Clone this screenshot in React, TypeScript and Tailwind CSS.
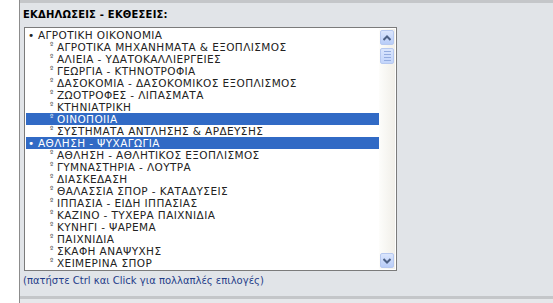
import React from 'react';

type Item = { label: string; level: 0 | 1; selected?: boolean };

const items: Item[] = [
  { label: 'ΑΓΡΟΤΙΚΗ ΟΙΚΟΝΟΜΙΑ', level: 0 },
  { label: 'ΑΓΡΟΤΙΚΑ ΜΗΧΑΝΗΜΑΤΑ & ΕΞΟΠΛΙΣΜΟΣ', level: 1 },
  { label: 'ΑΛΙΕΙΑ - ΥΔΑΤΟΚΑΛΛΙΕΡΓΕΙΕΣ', level: 1 },
  { label: 'ΓΕΩΡΓΙΑ - ΚΤΗΝΟΤΡΟΦΙΑ', level: 1 },
  { label: 'ΔΑΣΟΚΟΜΙΑ - ΔΑΣΟΚΟΜΙΚΟΣ ΕΞΟΠΛΙΣΜΟΣ', level: 1 },
  { label: 'ΖΩΟΤΡΟΦΕΣ - ΛΙΠΑΣΜΑΤΑ', level: 1 },
  { label: 'ΚΤΗΝΙΑΤΡΙΚΗ', level: 1 },
  { label: 'ΟΙΝΟΠΟΙΙΑ', level: 1, selected: true },
  { label: 'ΣΥΣΤΗΜΑΤΑ ΑΝΤΛΗΣΗΣ & ΑΡΔΕΥΣΗΣ', level: 1 },
  { label: 'ΑΘΛΗΣΗ - ΨΥΧΑΓΩΓΙΑ', level: 0, selected: true },
  { label: 'ΑΘΛΗΣΗ - ΑΘΛΗΤΙΚΟΣ ΕΞΟΠΛΙΣΜΟΣ', level: 1 },
  { label: 'ΓΥΜΝΑΣΤΗΡΙΑ - ΛΟΥΤΡΑ', level: 1 },
  { label: 'ΔΙΑΣΚΕΔΑΣΗ', level: 1 },
  { label: 'ΘΑΛΑΣΣΙΑ ΣΠΟΡ - ΚΑΤΑΔΥΣΕΙΣ', level: 1 },
  { label: 'ΙΠΠΑΣΙΑ - ΕΙΔΗ ΙΠΠΑΣΙΑΣ', level: 1 },
  { label: 'ΚΑΖΙΝΟ - ΤΥΧΕΡΑ ΠΑΙΧΝΙΔΙΑ', level: 1 },
  { label: 'ΚΥΝΗΓΙ - ΨΑΡΕΜΑ', level: 1 },
  { label: 'ΠΑΙΧΝΙΔΙΑ', level: 1 },
  { label: 'ΣΚΑΦΗ ΑΝΑΨΥΧΗΣ', level: 1 },
  { label: 'ΧΕΙΜΕΡΙΝΑ ΣΠΟΡ', level: 1 },
];

function ScrollButton({ dir }: { dir: 'up' | 'down' }) {
  return (
    <div className="w-[14px] h-[15px] rounded-[2px] border border-[#b7c9f0] bg-gradient-to-b from-[#dbe6fd] to-[#b9cdf8] flex items-center justify-center">
      <svg width="8" height="6" viewBox="0 0 8 6">
        {dir === 'up' ? (
          <path d="M0.5 5 L4 1.5 L7.5 5" stroke="#4d6185" strokeWidth="2" fill="none" />
        ) : (
          <path d="M0.5 1 L4 4.5 L7.5 1" stroke="#4d6185" strokeWidth="2" fill="none" />
        )}
      </svg>
    </div>
  );
}

export default function App() {
  return (
    <div className="w-[553px] h-[303px] flex bg-white overflow-hidden" style={{ fontFamily: '"DejaVu Sans", Verdana, sans-serif' }}>
      <div className="w-[19px] bg-white" />
      <div className="flex-1 flex flex-col border-l border-[#8c8c8c] bg-[#e1e4e8]">
        <div className="h-[3px] bg-[#c4c6c9]" />
        <div className="flex-1 pl-[3px] pt-[6px]">
          <div className="text-[10px] font-bold text-black leading-[12px] tracking-[0.2px]">ΕΚΔΗΛΩΣΕΙΣ - ΕΚΘΕΣΕΙΣ:</div>
          <div className="mt-[6px] ml-[1px] w-[373px] h-[244px] border border-[#7b7b7b] bg-white flex p-[1px]">
            <div className="flex-1 flex flex-col overflow-hidden">
              {items.map((it) => (
                <div
                  key={it.label}
                  className={`h-[12px] flex items-center whitespace-nowrap text-[10.5px] leading-[12px] tracking-[0.4px] ${
                    it.selected ? 'bg-[#316ac5] text-white' : 'text-[#222]'
                  } ${it.level === 0 ? 'pl-[2px]' : 'pl-[24px]'}`}
                >
                  <span className={`${it.level === 0 ? 'w-[10px]' : 'w-[7px] text-[7px] relative -top-[2px]'} inline-block shrink-0`}>
                    {it.level === 0 ? '•' : 'º'}
                  </span>
                  {it.label}
                </div>
              ))}
            </div>
            <div className="w-[16px] bg-gradient-to-r from-[#fdfdfb] to-[#f1efe9] flex flex-col items-center justify-between py-[1px]">
              <div className="flex flex-col items-center gap-[3px]">
                <ScrollButton dir="up" />
                <div className="w-[14px] h-[16px] rounded-[2px] border border-[#b7c9f0] bg-gradient-to-b from-[#dbe6fd] to-[#c3d5fb] flex flex-col items-center justify-center gap-[2px]">
                  <div className="w-[7px] h-[1px] bg-[#94acdf]" />
                  <div className="w-[7px] h-[1px] bg-[#94acdf]" />
                  <div className="w-[7px] h-[1px] bg-[#94acdf]" />
                  <div className="w-[7px] h-[1px] bg-[#94acdf]" />
                </div>
              </div>
              <ScrollButton dir="down" />
            </div>
          </div>
          <div className="mt-[4px] text-[10px] leading-[12px] text-[#1f3c88]">(πατήστε Ctrl και Click για πολλαπλές επιλογές)</div>
        </div>
        <div className="h-[3px] bg-[#c4c6c9]" />
        <div className="h-[4px] bg-[#e6e8eb]" />
      </div>
    </div>
  );
}
